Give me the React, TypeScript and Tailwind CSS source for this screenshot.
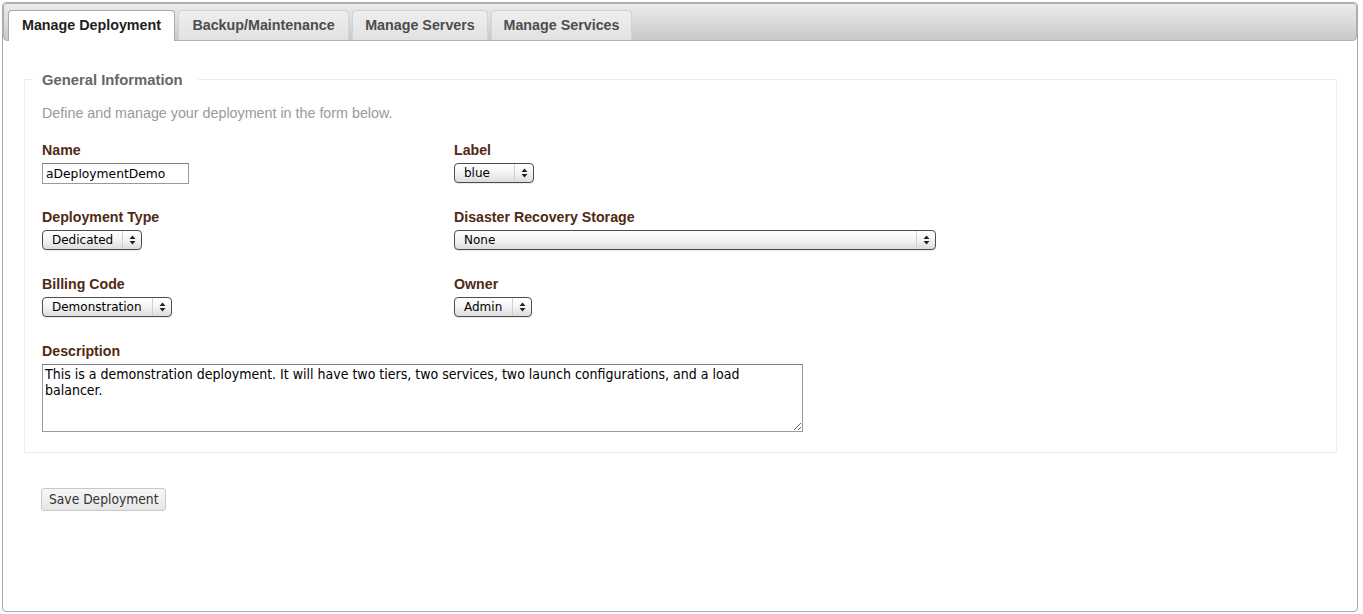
import React from 'react'

const tabs = [
  { label: 'Manage Deployment', w: 'w-[167px]' },
  { label: 'Backup/Maintenance', w: 'w-[171px]' },
  { label: 'Manage Servers', w: 'w-[136px]' },
  { label: 'Manage Services', w: 'w-[141px]' },
]

const Arrows = () => (
  <svg width="7" height="10" viewBox="0 0 7 10">
    <path d="M3.5 0.5 L6.5 4 L0.5 4 Z" fill="#222" />
    <path d="M3.5 9.5 L6.5 6 L0.5 6 Z" fill="#222" />
  </svg>
)

const Select = ({ value, width }: { value: string; width: string }) => (
  <div
    className={`${width} h-[20px] flex items-stretch rounded-[4px] border border-[#4d4d4d] bg-gradient-to-b from-white via-[#f4f4f4] to-[#dcdcdc] shadow-[0_1px_0_rgba(0,0,0,0.08)] text-[12px] leading-[18px] text-black`}
    style={{ fontFamily: '"DejaVu Sans", sans-serif' }}
  >
    <span className="flex-1 pl-[9px] truncate">{value}</span>
    <span className="w-[19px] border-l border-[#cfcfcf] flex items-center justify-center">
      <Arrows />
    </span>
  </div>
)

const Field = ({ label, children }: { label: string; children: React.ReactNode }) => (
  <div>
    <div className="text-[14.2px] leading-[17px] font-bold text-[#4f2a13] mb-[4px]">{label}</div>
    {children}
  </div>
)

export default function App() {
  return (
    <div className="p-[2px] w-[1360px] bg-white" style={{ fontFamily: '"Liberation Sans", Arial, sans-serif' }}>
      <div className="h-[610px] border border-[#a9a9a9] rounded-[4px] flex flex-col">
        {/* tab strip */}
        <div className="h-[38px] rounded-[4px] border border-[#b0b0b0] bg-gradient-to-b from-[#ececec] to-[#c9c9c9] flex items-end gap-[3px] pl-[4px]">
          {tabs.map((t, i) =>
            i === 0 ? (
              <div
                key={t.label}
                className={`${t.w} h-[31px] -mb-px rounded-t-[4px] border border-b-0 border-[#aaa] bg-white text-[14.3px] font-bold text-[#1e1e1e] flex items-center justify-center`}
              >
                {t.label}
              </div>
            ) : (
              <div
                key={t.label}
                className={`${t.w} h-[30px] rounded-t-[4px] border border-b-0 border-[#d2d2d2] bg-gradient-to-b from-[#eeeeee] to-[#e2e2e2] text-[14.3px] font-bold text-[#4d4d4d] flex items-center justify-center`}
              >
                {t.label}
              </div>
            )
          )}
        </div>

        <div className="pl-[21px] pr-[20px] pt-[30px]">
          <fieldset className="border border-[#ececec] px-[8px] pb-[20px]">
            <legend className="pl-[9px] pr-[15px] text-[14.8px] leading-[17px] font-bold text-[#666] translate-y-px">
              General Information
            </legend>
            <div className="pl-[9px]">
              <p className="mt-[17px] text-[14.3px] leading-[17px] text-[#999]">
                Define and manage your deployment in the form below.
              </p>

              <div className="mt-[20px] grid grid-cols-[412px_1fr] grid-rows-[42px_42px_42px_auto] gap-y-[25px]">
                <Field label="Name">
                  <input
                    defaultValue="aDeploymentDemo"
                    className="block w-[147px] h-[21px] border border-[#9a9a9a] border-t-[#7d7d7d] px-[3px] text-[12.3px] text-black outline-none"
                    style={{ fontFamily: '"DejaVu Sans", sans-serif' }}
                  />
                </Field>
                <Field label="Label">
                  <Select value="blue" width="w-[80px]" />
                </Field>
                <Field label="Deployment Type">
                  <Select value="Dedicated" width="w-[100px]" />
                </Field>
                <Field label="Disaster Recovery Storage">
                  <Select value="None" width="w-[482px]" />
                </Field>
                <Field label="Billing Code">
                  <Select value="Demonstration" width="w-[130px]" />
                </Field>
                <Field label="Owner">
                  <Select value="Admin" width="w-[78px]" />
                </Field>
                <div className="col-span-2">
                  <Field label="Description">
                    <textarea
                      defaultValue="This is a demonstration deployment. It will have two tiers, two services, two launch configurations, and a load balancer."
                      className="block w-[761px] h-[68px] border border-[#9a9a9a] border-t-[#7d7d7d] px-[2px] py-[1px] text-[14px] leading-[16px] text-black outline-none resize"
                      style={{ fontFamily: '"DejaVu Sans Condensed", "DejaVu Sans", sans-serif' }}
                    />
                  </Field>
                </div>
              </div>
            </div>
          </fieldset>

          <button
            className="mt-[35px] ml-[17px] h-[23px] px-[7px] rounded-[3px] border border-[#c9c9c9] bg-gradient-to-b from-[#f7f7f7] to-[#e6e6e6] text-[13.7px] text-[#333]"
            style={{ fontFamily: '"DejaVu Sans Condensed", "DejaVu Sans", sans-serif' }}
          >
            Save Deployment
          </button>
        </div>
      </div>
    </div>
  )
}
